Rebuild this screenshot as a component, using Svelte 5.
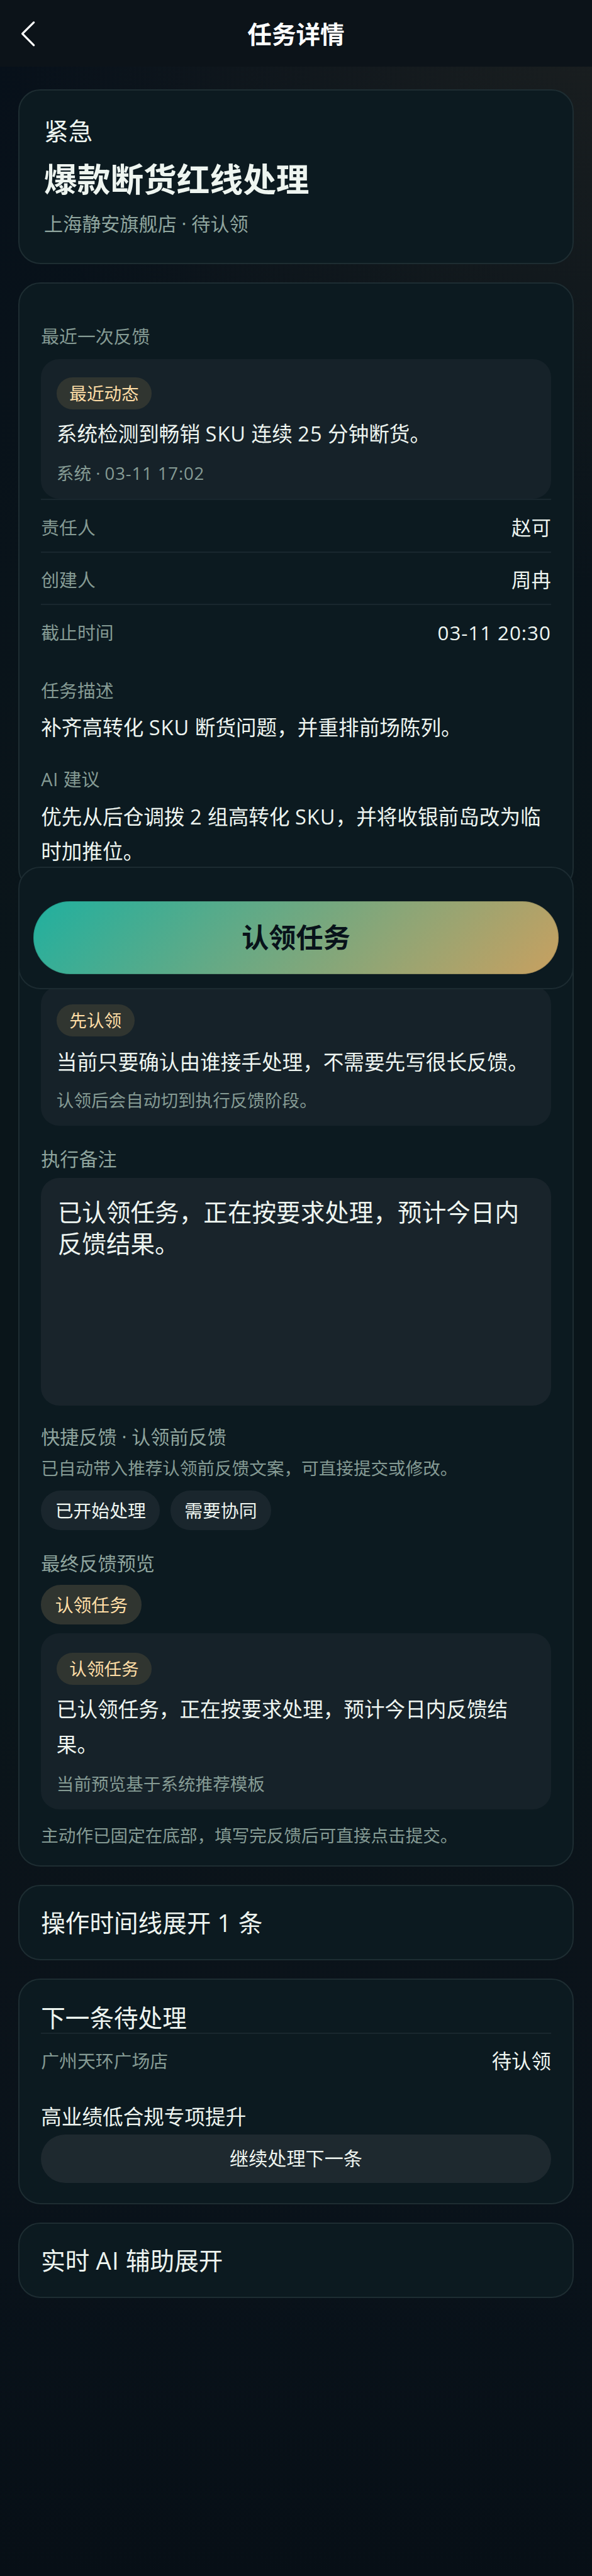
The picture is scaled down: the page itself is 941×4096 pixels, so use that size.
<script>
  const rows = [
    { label: '责任人', value: '赵可' },
    { label: '创建人', value: '周冉' },
    { label: '截止时间', value: '03-11 20:30' }
  ];
  const quick = ['已开始处理', '需要协同'];
  const advice = ['优先从后仓调拨 2 组高转化 SKU，并将收银前岛改为临', '时加推位。'];

  // Splits a string so that Latin words and digits get their own tracking.
  const runs = (s) => s.split(/([A-Za-z0-9:\-]+(?: [A-Za-z0-9:\-]+)*)/).filter((p) => p !== '');
  const latin = (p) => /^[A-Za-z0-9]/.test(p);
</script>

{#snippet mix(s)}{#each runs(s) as p}{#if latin(p)}<span class="latin">{p}</span>{:else}{p}{/if}{/each}{/snippet}

{#snippet note(kind, tag, text, meta)}
  <div class="note {kind}">
    <span class="tag">{tag}</span>
    <p class="note-text">{@render mix(text)}</p>
    <p class="note-meta">{@render mix(meta)}</p>
  </div>
{/snippet}

{#snippet row(label, value)}
  <div class="row"><span class="row-label">{label}</span><span class="row-value">{@render mix(value)}</span></div>
{/snippet}

<div class="page">
  <header>
    <svg class="back" viewBox="0 0 12 18" aria-hidden="true"><path d="M9.4 1.5 1.9 9l7.5 7.5" /></svg>
    <h1>任务详情</h1>
  </header>

  <main>
    <section class="card hero">
      <p class="level">紧急</p>
      <h2>爆款断货红线处理</h2>
      <p class="sub">上海静安旗舰店 · 待认领</p>
    </section>

    <section class="card detail">
      <p class="label">最近一次反馈</p>
      {@render note('latest', '最近动态', '系统检测到畅销 SKU 连续 25 分钟断货。', '系统 · 03-11 17:02')}
      {#each rows as r}{@render row(r.label, r.value)}{/each}
      <p class="label desc">任务描述</p>
      <p class="body">{@render mix('补齐高转化 SKU 断货问题，并重排前场陈列。')}</p>
      <p class="label advice">{@render mix('AI 建议')}</p>
      <p class="body">{#each advice as line}<span class="line">{@render mix(line)}</span>{/each}</p>
    </section>

    <section class="card feedback">
      {@render note('guide', '先认领', '当前只要确认由谁接手处理，不需要先写很长反馈。', '认领后会自动切到执行反馈阶段。')}
      <p class="label2 remark">执行备注</p>
      <div class="textarea">已认领任务，正在按要求处理，预计今日内反馈结果。</div>
      <p class="label2 quick">快捷反馈 · 认领前反馈</p>
      <p class="hint">已自动带入推荐认领前反馈文案，可直接提交或修改。</p>
      <div class="chips">
        {#each quick as q}<span class="chip">{q}</span>{/each}
      </div>
      <p class="label2 preview">最终反馈预览</p>
      <div class="chips gold-row"><span class="chip gold">认领任务</span></div>
      {@render note('draft', '认领任务', '已认领任务，正在按要求处理，预计今日内反馈结果。', '当前预览基于系统推荐模板')}
      <p class="hint last">主动作已固定在底部，填写完反馈后可直接点击提交。</p>
    </section>

    <section class="card fold">{@render mix('操作时间线展开 1 条')}</section>

    <section class="card next">
      <p class="next-title">下一条待处理</p>
      {@render row('广州天环广场店', '待认领')}
      <p class="body task">高业绩低合规专项提升</p>
      <button class="ghost">继续处理下一条</button>
    </section>

    <section class="card fold">{@render mix('实时 AI 辅助展开')}</section>
  </main>

  <div class="action-bar"><button class="primary">认领任务</button></div>
</div>

<style>
  :global(html) { font-size: 24.128px; }
  :global(body) { background: #070f16; }
  * { box-sizing: border-box; }
  p, h1, h2 { margin: 0; }
  button { font-family: inherit; padding: 0; margin: 0; }

  .page {
    position: relative;
    height: 4096px;
    overflow: hidden;
    color: #eef5f0;
    font-family: 'Open Sans', 'Noto Sans CJK SC', sans-serif;
    background:
      radial-gradient(circle 54rem at 100% 0, rgba(205, 165, 85, 0.098), rgba(205, 165, 85, 0) 72%),
      linear-gradient(180deg, #07101a 0%, #0a151a 38%, #0a151a 65%, #0b131a 75%, #09121a 88%, #070f16 100%);
  }
  .latin { letter-spacing: 0.03em; }

  header {
    height: 4.4rem;
    display: grid;
    grid-template-columns: 4.4rem 1fr 4.4rem;
    align-items: center;
    background: #0c1319;
  }
  .back { width: 1.2rem; height: 1.8rem; margin: 0.05rem 0 0 1.27rem; }
  .back path { fill: none; stroke: #fff; stroke-width: 1.35; stroke-linecap: round; stroke-linejoin: round; }
  h1 { font-size: 1.6rem; font-weight: 700; line-height: 2rem; text-align: center; color: #fff; padding-top: 0.05rem; }

  main { padding: 1.5rem 1.2rem 0; display: flex; flex-direction: column; gap: 1.2rem; }
  .card {
    border: 0.1rem solid #1e2d32;
    border-radius: 1.45rem;
    background: #0c1a20;
    padding: 0 1.42rem;
    flex: none;
  }

  .hero { height: 11.5rem; padding: 1.63rem 1.62rem 0; }
  .level { font-size: 1.6rem; line-height: 2rem; }
  h2 { font-size: 2.184rem; font-weight: 700; line-height: 2.8rem; margin-top: 0.8rem; }
  .sub { font-size: 1.248rem; line-height: 1.8rem; margin-top: 0.63rem; color: #8fa59e; }

  .detail { height: 40.1rem; padding-top: 2.6rem; }
  .label { font-size: 1.196rem; line-height: 1.8rem; color: #859b94; }
  .label2 { font-size: 1.248rem; line-height: 1.8rem; color: #8fa59e; }
  .body { font-size: 1.352rem; line-height: 2.3rem; margin-top: 0.4rem; }
  .line { display: block; white-space: nowrap; }
  .desc { margin-top: 1.32rem; }
  .advice { margin-top: 1.38rem; }

  .note { background: #162229; border-radius: 1.2rem; padding: 1.2rem 1.02rem 0.9rem; margin-top: 0.6rem; display: flex; flex-direction: column; align-items: flex-start; }
  .tag { height: 2.1rem; line-height: 2.14rem; border-radius: 1.05rem; padding: 0 0.85rem; font-size: 1.144rem; background: #303530; color: #ffdea6; }
  .note-text { font-size: 1.352rem; line-height: 2.3rem; margin-top: 0.47rem; }
  .note-meta { font-size: 1.144rem; line-height: 1.6rem; margin-top: 0.63rem; color: #859b94; }
  .guide .note-text { margin-top: 0.56rem; }
  .guide .note-meta { margin-top: 0.54rem; }
  .draft { padding-top: 1.3rem; }

  .row { height: 3.46rem; border-top: 0.1rem solid #19272e; padding-top: 0.19rem; display: flex; align-items: center; justify-content: space-between; }
  .row-label { font-size: 1.196rem; line-height: 1.8rem; color: #859b94; }
  .row-value { font-size: 1.3rem; line-height: 1.8rem; }

  .feedback { height: 63.1rem; padding-top: 4.42rem; }
  .remark { margin-top: 1.26rem; }
  .textarea { height: 15rem; margin-top: 0.36rem; border-radius: 1.2rem; background: #19242b; padding: 1.2rem 1.1rem; font-size: 1.6rem; line-height: 2.1rem; }
  .quick { margin-top: 1.18rem; }
  .hint { font-size: 1.144rem; line-height: 1.6rem; margin-top: 0.34rem; color: #859b94; }
  .chips { display: flex; gap: 0.68rem; margin-top: 0.68rem; }
  .chip { height: 2.6rem; line-height: 2.67rem; border-radius: 1.3rem; padding: 0 0.93rem; font-size: 1.196rem; background: #1a262d; }
  .chip.gold { background: #303530; color: #ffdea6; }
  .preview { margin-top: 1.29rem; }
  .gold-row { margin-top: 0.53rem; }
  .last { margin-top: 0.9rem; }

  .fold { height: 4.97rem; font-size: 1.6rem; line-height: 4.86rem; }
  .next { height: 14.9rem; padding-top: 1.6rem; }
  .next-title { font-size: 1.6rem; line-height: 1.9rem; }
  .task { margin-top: 0.94rem; }
  .ghost { display: block; width: 100%; height: 3.2rem; border: 0; border-radius: 1.6rem; background: #1e292f; color: #eef5f0; font-size: 1.248rem; line-height: 3.15rem; }

  .action-bar {
    position: absolute;
    top: 57.1rem;
    left: 1.2rem;
    right: 1.2rem;
    height: 8.1rem;
    border: 0.1rem solid #1c2b31;
    border-radius: 1.45rem;
    background: #0c1a20;
    padding: 2.2rem 0.9rem 0;
  }
  .primary {
    display: block;
    width: 100%;
    height: 4.8rem;
    border: 0;
    border-radius: 2.4rem;
    background: linear-gradient(135deg, #20b09f, #c8a060);
    box-shadow: inset 0 0 0 1px rgba(0, 0, 0, 0.14);
    color: #08121a;
    font-size: 1.79rem;
    font-weight: 700;
    line-height: 4.7rem;
  }
</style>
